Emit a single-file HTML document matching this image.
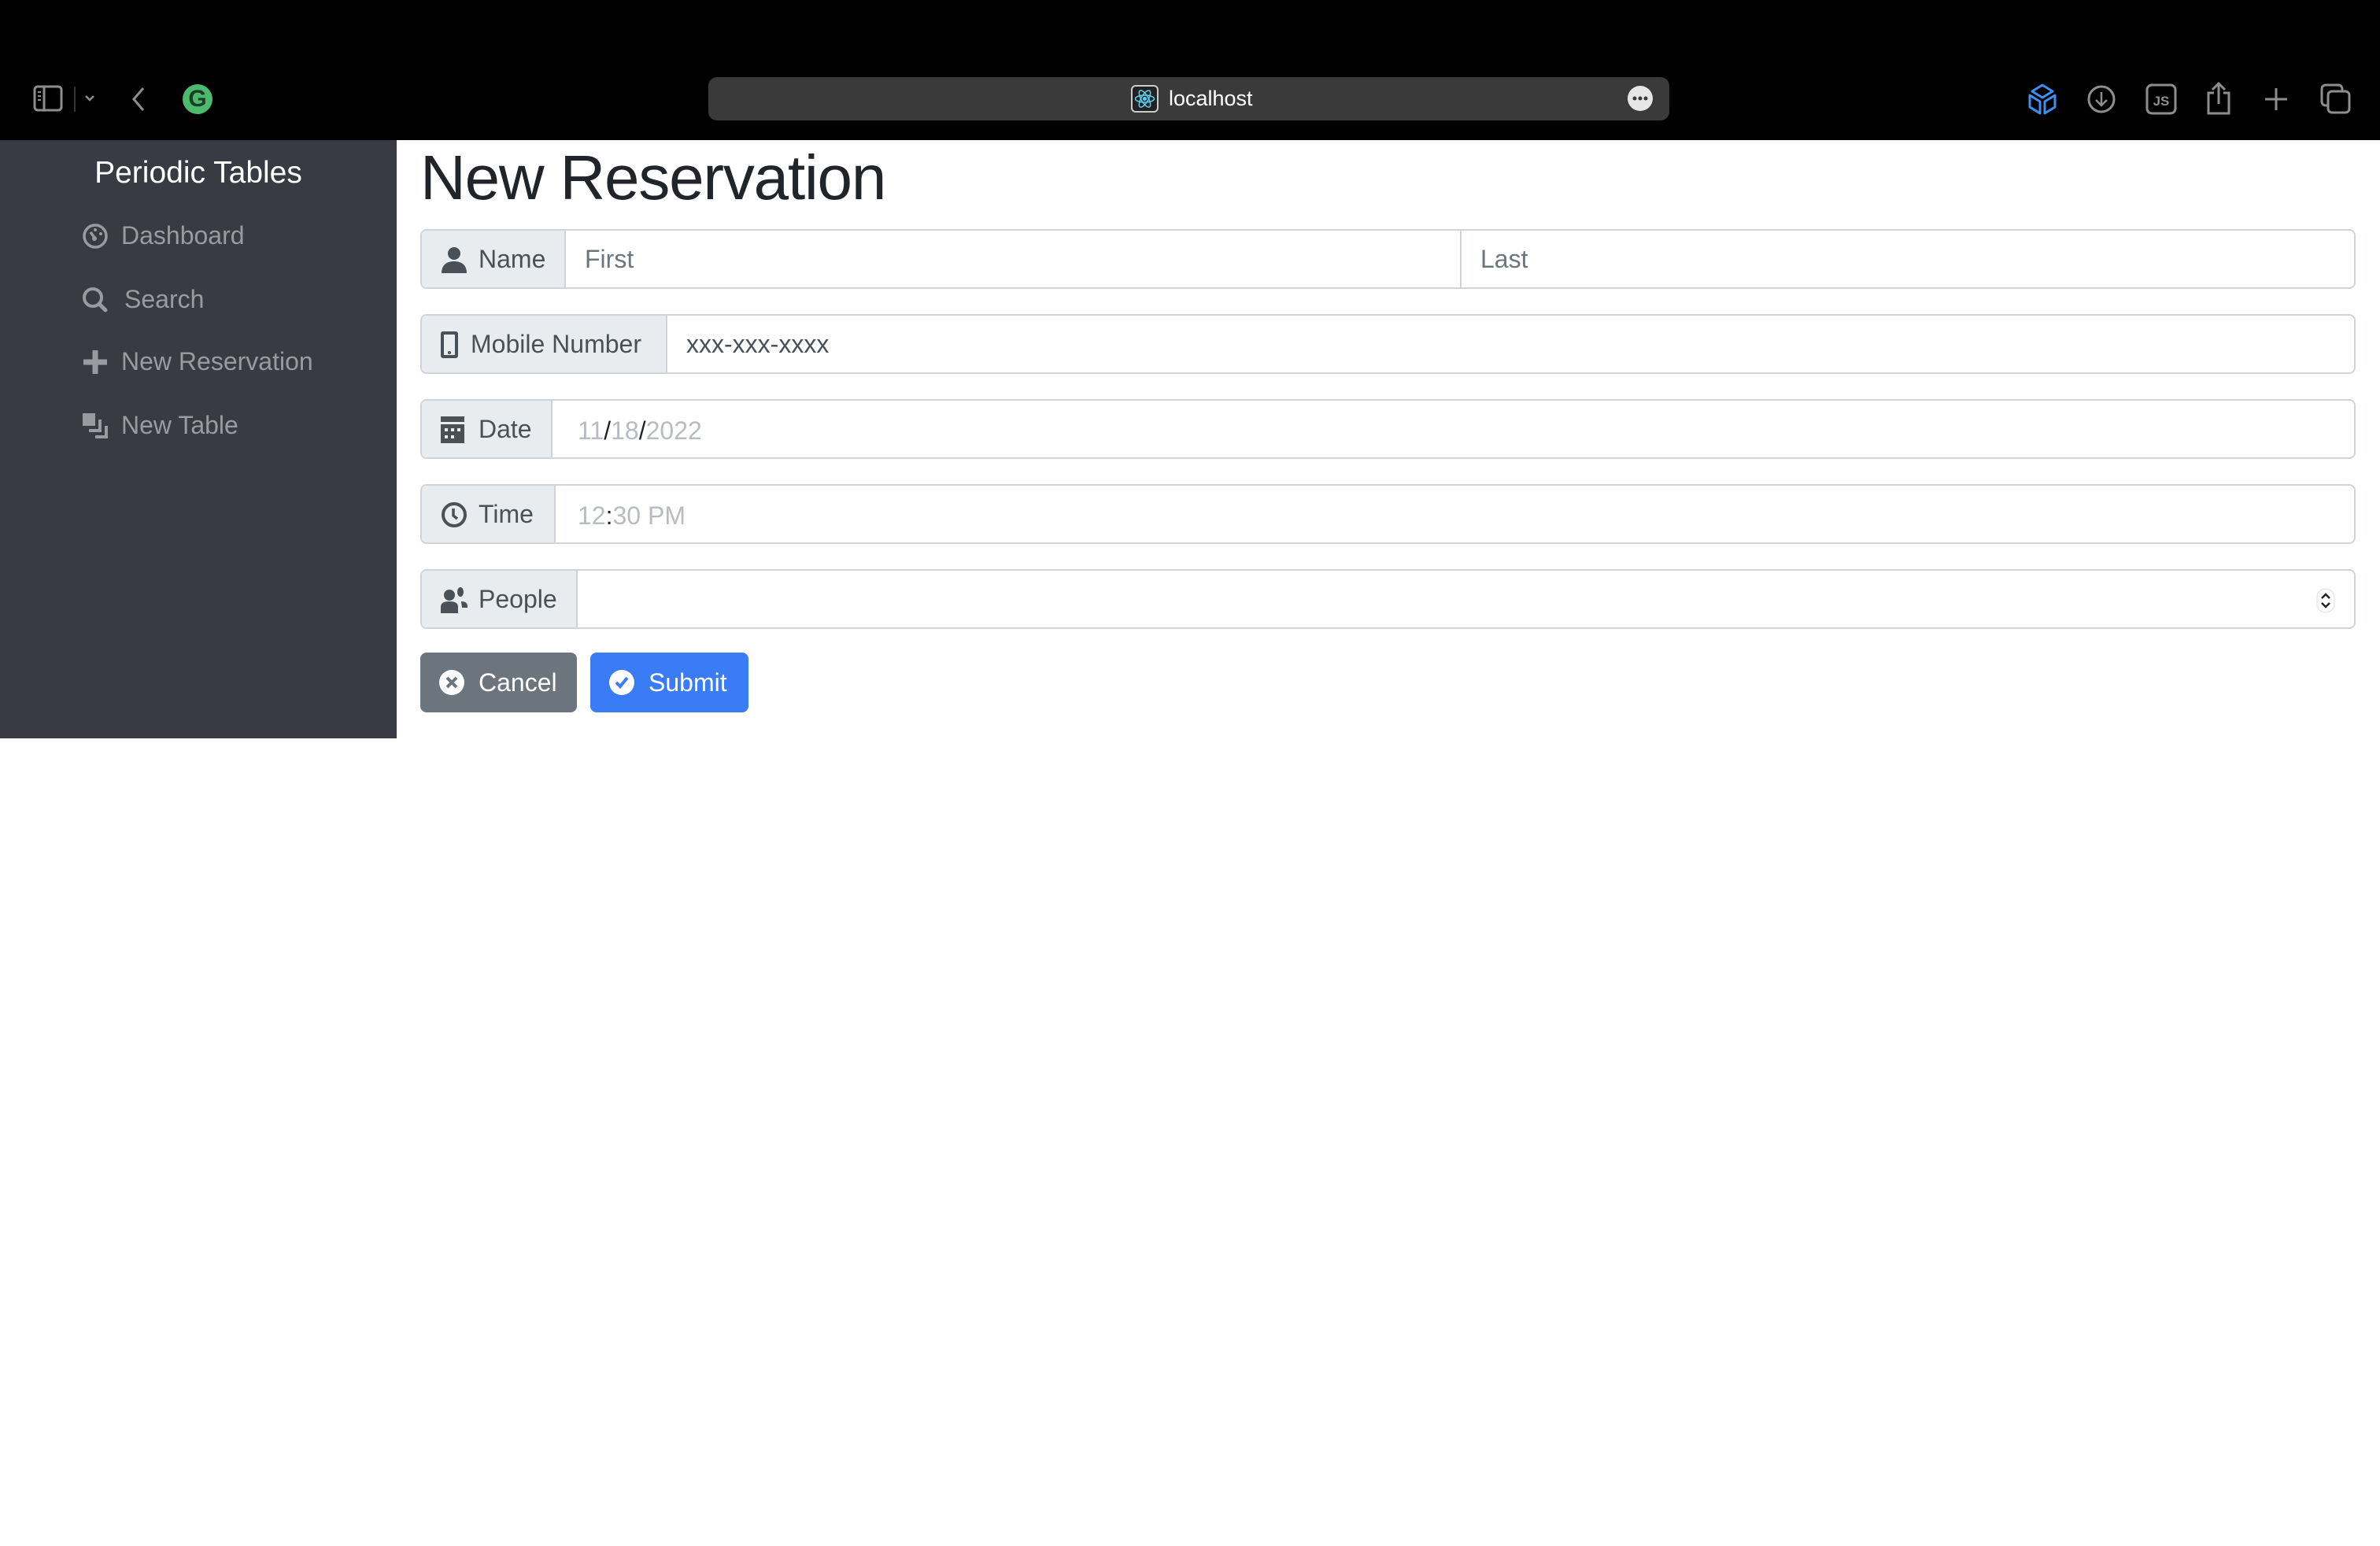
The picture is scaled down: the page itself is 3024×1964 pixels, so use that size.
<!DOCTYPE html>
<html><head><meta charset="utf-8"><style>
*{box-sizing:border-box;margin:0;padding:0}
body{width:3024px;height:1964px;background:#fff;font-family:"Liberation Sans",Helvetica,Arial,sans-serif;position:relative;overflow:hidden}
#top{position:absolute;left:0;top:0;width:3024px;height:178px;background:#000}
#addr{position:absolute;left:900px;top:98px;width:1221px;height:55px;background:#3a3a3a;border-radius:11px}
.ic{position:absolute}
#side{position:absolute;left:0;top:178px;width:504px;height:760px;background:#3a3a45}
#side h2{position:absolute;left:0;width:504px;text-align:center;top:20px;color:#fff;font-weight:400;font-size:39px}
.nav{position:absolute;left:104px;color:#9a9ba2;font-size:32px;height:40px;line-height:40px}
.nav svg{position:absolute;left:0;top:4px}
.nav span{position:absolute;left:50px;white-space:nowrap}
h1{position:absolute;left:534px;top:180px;font-size:80px;font-weight:500;color:#212529;letter-spacing:-1.2px}
.row{position:absolute;left:534px;width:2459px;height:76px;border:2px solid #ced4da;border-radius:8px;display:flex;overflow:hidden}
.add{background:#e9ecef;border-right:2px solid #ced4da;height:100%;position:relative;color:#495057;font-size:32px;line-height:72px;padding-left:72px;flex:none}
.add svg{position:absolute;left:24px;top:20px}
.inp{flex:1;font-size:32px;line-height:72px;padding-left:24px;color:#6c757d;position:relative}
.btn{position:absolute;top:829px;height:76px;border-radius:8px;color:#fff;font-size:32px;line-height:76px;padding-left:74px}
.btn svg{position:absolute;left:24px;top:22px}
</style></head><body>
<div id="top">
<svg class="ic" style="left:42px;top:108px" width="40" height="36" viewBox="0 0 40 36"><rect x="2" y="2" width="34" height="30" rx="4" fill="none" stroke="#8e8e8e" stroke-width="3"/><line x1="14" y1="2" x2="14" y2="32" stroke="#8e8e8e" stroke-width="3"/><path d="M6 9h4M6 14h4M6 19h4" stroke="#8e8e8e" stroke-width="2"/></svg>
<div style="position:absolute;left:94px;top:110px;width:2px;height:32px;background:#333"></div>
<svg class="ic" style="left:106px;top:118px" width="16" height="14" viewBox="0 0 16 14"><path d="M3 4l5 5 5-5" fill="none" stroke="#8e8e8e" stroke-width="2.5"/></svg>
<svg class="ic" style="left:164px;top:108px" width="24" height="36" viewBox="0 0 24 36"><path d="M18 4L6 18l12 14" fill="none" stroke="#8e8e8e" stroke-width="3"/></svg>
<div style="position:absolute;left:232px;top:107px;width:38px;height:38px;border-radius:50%;background:#4cb96c;color:#1a3d26;font-weight:700;font-size:30px;line-height:38px;text-align:center">G</div>
<div id="addr">
<div style="position:absolute;left:537px;top:10px;width:35px;height:35px;border:2px solid #ccc;border-radius:6px;background:#222"><svg width="31" height="31" viewBox="0 0 31 31"><g fill="none" stroke="#5ccfee" stroke-width="1.5"><ellipse cx="15.5" cy="15.5" rx="12" ry="4.5"/><ellipse cx="15.5" cy="15.5" rx="12" ry="4.5" transform="rotate(60 15.5 15.5)"/><ellipse cx="15.5" cy="15.5" rx="12" ry="4.5" transform="rotate(120 15.5 15.5)"/></g><circle cx="15.5" cy="15.5" r="2.5" fill="#5ccfee"/></svg></div>
<div style="position:absolute;left:585px;top:0;line-height:55px;color:#fff;font-size:27px">localhost</div>
<div style="position:absolute;left:1168px;top:11px;width:32px;height:32px;border-radius:50%;background:#e6e6e6"><svg width="32" height="32"><circle cx="9" cy="16" r="2.5" fill="#3a3a3a"/><circle cx="16" cy="16" r="2.5" fill="#3a3a3a"/><circle cx="23" cy="16" r="2.5" fill="#3a3a3a"/></svg></div>
</div>
<svg class="ic" style="left:2575px;top:105px" width="40" height="42" viewBox="0 0 40 42"><g fill="none" stroke="#3d8ff0" stroke-width="3" stroke-linejoin="round"><path d="M20 3l13 8-13 8-13-8z"/><path d="M4 16l13 8v15L4 31z"/><path d="M36 16l-13 8v15l13-8z"/></g></svg>
<svg class="ic" style="left:2651px;top:107px" width="38" height="38" viewBox="0 0 38 38"><circle cx="19" cy="19" r="16" fill="none" stroke="#8e8e8e" stroke-width="3"/><path d="M19 10v17M12 20l7 7 7-7" fill="none" stroke="#8e8e8e" stroke-width="2.5"/></svg>
<svg class="ic" style="left:2726px;top:106px" width="40" height="40" viewBox="0 0 40 40"><rect x="2" y="2" width="36" height="36" rx="6" fill="none" stroke="#8e8e8e" stroke-width="3"/><text x="20" y="28" text-anchor="middle" font-family="Liberation Sans" font-weight="700" font-size="17" fill="#8e8e8e">JS</text></svg>
<svg class="ic" style="left:2802px;top:102px" width="34" height="46" viewBox="0 0 34 46"><path d="M11 16H4v26h26V16h-7" fill="none" stroke="#8e8e8e" stroke-width="3"/><path d="M17 30V4M9 12l8-8 8 8" fill="none" stroke="#8e8e8e" stroke-width="3"/></svg>
<svg class="ic" style="left:2874px;top:108px" width="36" height="36" viewBox="0 0 36 36"><path d="M18 4v28M4 18h28" stroke="#8e8e8e" stroke-width="3"/></svg>
<svg class="ic" style="left:2948px;top:106px" width="40" height="40" viewBox="0 0 40 40"><rect x="2" y="2" width="26" height="26" rx="5" fill="none" stroke="#8e8e8e" stroke-width="3"/><rect x="10" y="10" width="27" height="27" rx="5" fill="#000" stroke="#8e8e8e" stroke-width="3"/></svg>
</div>
<div id="side">
<h2>Periodic Tables</h2>
<div class="nav" style="top:101px"><svg width="34" height="34" viewBox="0 0 34 34"><circle cx="17" cy="17" r="14" fill="none" stroke="#9a9ba2" stroke-width="3.5"/><circle cx="17" cy="9" r="2" fill="#9a9ba2"/><circle cx="24" cy="14" r="2" fill="#9a9ba2"/><path d="M11 12l6 8" stroke="#9a9ba2" stroke-width="3.5"/><circle cx="16" cy="20" r="3" fill="#9a9ba2"/></svg><span>Dashboard</span></div>
<div class="nav" style="top:182px"><svg width="34" height="34" viewBox="0 0 34 34"><circle cx="14" cy="14" r="11" fill="none" stroke="#9a9ba2" stroke-width="4"/><path d="M22 22l8 8" stroke="#9a9ba2" stroke-width="5" stroke-linecap="round"/></svg><span style="left:54px">Search</span></div>
<div class="nav" style="top:261px"><svg width="34" height="34" viewBox="0 0 34 34"><path d="M17 2v30M2 17h30" stroke="#9a9ba2" stroke-width="7"/></svg><span>New Reservation</span></div>
<div class="nav" style="top:342px"><svg width="34" height="34" viewBox="0 0 34 34"><rect x="1" y="1" width="16" height="16" fill="#9a9ba2"/><path d="M21 9v12H9v4h16V9zM29 17v12H17v4h16V17z" fill="#9a9ba2"/></svg><span>New Table</span></div>
</div>
<h1>New Reservation</h1>
<div class="row" style="top:291px"><div class="add" style="width:183px"><svg width="34" height="34" viewBox="0 0 34 34"><circle cx="17" cy="9" r="8" fill="#495057"/><path d="M1 34c0-10 6-15 16-15s16 5 16 15z" fill="#495057"/></svg>Name</div><div class="inp" style="flex:none;width:1138px;border-right:2px solid #ced4da">First</div><div class="inp">Last</div></div>
<div class="row" style="top:399px"><div class="add" style="width:312px;padding-left:62px"><svg width="22" height="34" viewBox="0 0 22 34"><rect x="2" y="2" width="18" height="30" rx="1" fill="none" stroke="#495057" stroke-width="4"/><circle cx="11" cy="27" r="2" fill="#495057"/></svg>Mobile Number</div><div class="inp" style="color:#495057">xxx-xxx-xxxx</div></div>
<div class="row" style="top:507px"><div class="add" style="width:166px"><svg width="30" height="34" viewBox="0 0 30 34"><rect x="0" y="0" width="30" height="7" fill="#495057"/><rect x="0" y="10" width="30" height="24" fill="#495057"/><g fill="#e9ecef"><rect x="5" y="15" width="4" height="4"/><rect x="13" y="15" width="4" height="4"/><rect x="21" y="15" width="4" height="4"/><rect x="5" y="24" width="4" height="4"/><rect x="13" y="24" width="4" height="4"/></g></svg>Date</div><div class="inp" style="color:#b8bcc1;padding-left:32px;top:2px">11<span style="color:#212529">/</span>18<span style="color:#212529">/</span>2022</div></div>
<div class="row" style="top:615px"><div class="add" style="width:170px"><svg width="34" height="34" viewBox="0 0 34 34"><circle cx="17" cy="17" r="14" fill="none" stroke="#495057" stroke-width="4"/><path d="M16 9v9l5 4" fill="none" stroke="#495057" stroke-width="3.5"/></svg>Time</div><div class="inp" style="color:#b8bcc1;padding-left:28px;top:2px">12<span style="color:#212529">:</span>30 PM</div></div>
<div class="row" style="top:723px"><div class="add" style="width:198px"><svg width="34" height="34" viewBox="0 0 34 34"><circle cx="11" cy="11" r="7" fill="#495057"/><ellipse cx="25" cy="7" rx="4" ry="6" fill="#495057"/><path d="M0 34V26c0-5 4-7 11-7s11 2 11 7v8z" fill="#495057"/><path d="M26 19c5 0 8 2 8 6v2h-7z" fill="#495057"/></svg>People</div><div class="inp"><svg style="position:absolute;right:24px;top:22px" width="24" height="32" viewBox="0 0 24 32"><rect x="1" y="1" width="22" height="30" rx="11" fill="#fff" stroke="#ddd"/><path d="M7 13l5-5 5 5M7 19l5 5 5-5" fill="none" stroke="#222" stroke-width="2.5"/></svg></div></div>
<div class="btn" style="left:534px;width:199px;background:#6c757d"><svg width="32" height="32" viewBox="0 0 32 32"><circle cx="16" cy="16" r="16" fill="#fff"/><path d="M10 10l12 12M22 10L10 22" stroke="#6c757d" stroke-width="4"/></svg>Cancel</div>
<div class="btn" style="left:750px;width:201px;background:#3a7cf6"><svg width="32" height="32" viewBox="0 0 32 32"><circle cx="16" cy="16" r="16" fill="#fff"/><path d="M9 16l5 5 9-11" fill="none" stroke="#3a7cf6" stroke-width="4"/></svg>Submit</div>
</body></html>
